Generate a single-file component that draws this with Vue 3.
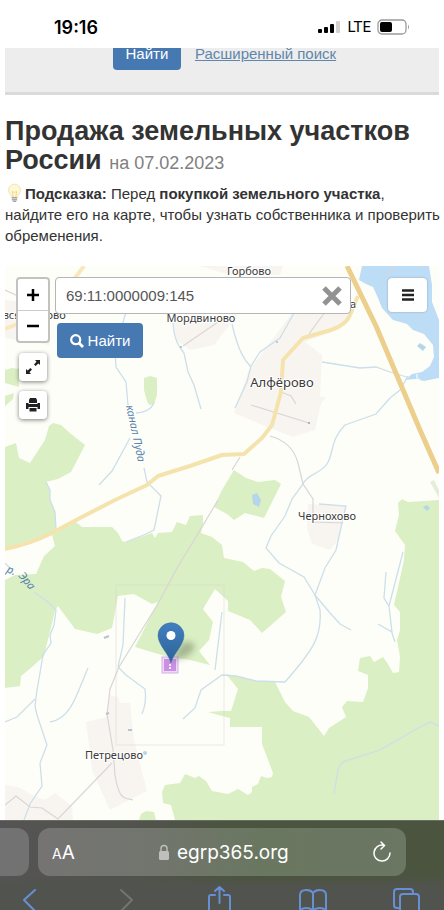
<script setup>
import { ref } from 'vue';

const numeroCatastral = ref('69:11:0000009:145');

const bosques = [
    'M5 447L16 443L19 458L30 463L45 440L49 426L53 423L61 425L71 434L85 445L71 472L58 479L46 482L50 490L50 500L55 512L56 531L5 549Z',
    'M52 535L76 522L82 527L112 527L118 533L122 541L126 542L152 533L155 538L158 533L172 532L177 522L186 525L190 516L203 515L203 524L201 533L212 537L222 545L224 558L243 562L254 571L262 568L270 569L285 581L281 597L286 612L262 633L250 620L228 611L228 601L215 589L203 609L213 622L209 640L199 651L210 665L190 660L165 656L135 647L158 602L152 604L134 594L118 596L112 628L97 634L75 629L58 606L55 611L44 656L32 667L21 676L20 686L5 688V580L15 575L36 574L44 556L55 546Z',
    'M222 490L234 470L246 478L258 482L275 480L281 484L264 518L245 513L234 520L227 514L214 507Z',
    'M439 500L408 502L402 499L398 503L399 515L395 531L405 545L404 560L394 605L400 612V630L397 640L400 657L399 672L393 673L388 664L383 657L374 662L370 656L360 658L358 671L368 675V688L363 702L347 701L342 707L346 717L329 728L324 736L309 717L293 711L285 702L275 682L256 681L226 674L238 689L231 711L222 711L208 712L222 716L230 718V727H262V744L273 773L272 777L267 778L261 776L258 784L252 787L252 792L248 795L238 789L228 794L212 791L206 781L199 776L195 778L185 774L180 783L165 785L162 792L163 803L171 805L175 820H439Z',
    'M139 820L141 814L146 811L154 812L156 820Z',
    'M144 378L150 376L157 378V395L154 404L149 405L147 401L144 390Z',
    'M5 370L12 368L19 369V387L5 383Z',
    'M5 396L14 393L13 399L5 406Z'
];

const poblados = [
    'M234 413L248 372L292 313L340 308L350 318L331 332L305 342L322 355L320 397L326 397L321 404L315 430L293 437L272 429Z',
    'M174 322L238 314L214 345L190 350L176 340Z',
    'M5 300L50 304V345L5 338Z',
    'M308 504L346 506L343 520L338 540L330 550L312 544L307 528Z',
    'M86 722L106 717L110 695L118 697L120 703L130 703L134 740L147 791L110 810L92 770Z',
    'M5 785L18 787L32 795L45 800L55 793L72 806L73 820H5Z',
    'M200 266H283L280 275H230Z'
];

const arroyos = [
    'M173 322C174 340 179 347 184 353L188 372L194 385L201 409',
    'M126 312L115 350L116 367L126 382L128 405M154 402Q151 412 136 413',
    'M130 438L112 471L99 485M144 468L147 482L161 496L154 530L146 534L126 542',
    'M46 482L50 490L50 500L55 512L56 529',
    'M294 313L280 338L260 352L251 366L247 382L235 408M232 324C238 350 244 360 251 367',
    'M322 362L360 368L376 367L390 372L410 378M408 376L400 390L390 398L376 414L345 425C330 440 334 453 327 464C320 474 307 474 303 484L292 499L285 516L271 536L266 548L279 563L304 577L315 595L320 610C322 635 315 648 285 682',
    'M319 504L346 506L342 523L336 550L325 568L315 595L330 613L340 624L351 630',
    'M386 572L384 598L389 606L403 552M389 606L392 632L378 624M391 630L395 642',
    'M334 794L338 770Q340 762 348 760L380 750L420 727L430 722L439 726',
    'M5 563L12 570M34 592L48 602L56 610L54 625L50 635L51 643L43 655L40 673L37 690L35 706L37 715L47 745L40 763L42 786L30 804L24 820M35 699L17 717L5 722',
    'M88 668C78 690 72 719 50 722M125 598L123 645L118 667L126 675L145 689Q147 702 142 714',
    'M183 719L195 708L201 690L222 675L236 676L256 681L285 682M222 612L215 670'
];

const caminos = [
    'M270 436C285 440 294 448 298 463L303 484L313 499L313 522L343 523',
    'M240 457L232 470M218 500L196 537L177 568L159 602L119 667L110 689L107 714L113 750L115 775C119 800 124 798 133 800',
    'M251 405L309 423M281 392L291 396L296 404M325 312L309 334M218 322L183 346',
    'M5 805L16 796L30 807L42 808L58 819L112 763',
    'M5 290L20 297L50 298M392 266L386 276'
];

const villas = [
    { nombre: 'Горбово', x: 249, y: 275, tam: 11 },
    { nombre: 'Мордвиново', x: 201, y: 322, tam: 11 },
    { nombre: 'Овсянниково', x: 30, y: 319, tam: 11 },
    { nombre: 'а', x: 353, y: 308, tam: 11 },
    { nombre: 'Алфёрово', x: 282, y: 387, tam: 13 },
    { nombre: 'Чернохово', x: 327, y: 520, tam: 11 },
    { nombre: 'Петрецово', x: 114, y: 759, tam: 11 }
];
</script>

<template>
    <div class="pantalla">
        <header class="barra-estado">
            <time>19:16</time>
            <div class="estado">
                <svg width="24" height="14" viewBox="0 0 24 14">
                    <rect x="1" y="9" width="4" height="4" rx="1" />
                    <rect x="7" y="7" width="4" height="6" rx="1" />
                    <rect x="13" y="4" width="4" height="9" rx="1" />
                    <rect x="19" y="1" width="4" height="12" rx="1" fill="#d2d2d2" />
                </svg>
                <span>LTE</span>
                <svg width="33" height="16" viewBox="0 0 33 16">
                    <rect x="1" y="1" width="28" height="14" rx="4" fill="none" stroke="#9b9b9b" stroke-width="1.3" />
                    <rect x="3" y="3" width="12" height="10" rx="2" />
                    <path d="M31 5.5Q33 8 31 10.5Z" fill="#9b9b9b" />
                </svg>
            </div>
        </header>

        <main>
            <section class="franja">
                <div class="franja-acciones">
                    <button class="btn-azul btn-superior">Найти</button>
                    <a href="#">Расширенный поиск</a>
                </div>
            </section>

            <h1>Продажа земельных участков России <small>на 07.02.2023</small></h1>

            <p class="pista">
                <svg class="bombilla" width="20" height="20" viewBox="0 0 20 20">
                    <path d="M3.5 7.2A6 6 0 0 1 15.5 7.2C15.5 10.5 12.7 11.5 12.3 14.5H6.7C6.3 11.5 3.5 10.5 3.5 7.2Z" fill="#fff9d2" stroke="#ece5bc" />
                    <path d="M8.2 14L7.3 8.3L9.5 9.5L11.7 8.3L10.8 14" fill="none" stroke="#f0d797" />
                    <path d="M6.8 14H12.2V17L10.8 19H8.2L6.8 17Z" fill="#a4a4aa" />
                    <path d="M6.8 15.5H12.2M7 17.3H12" stroke="#dcdce2" stroke-width=".7" />
                </svg>
                <b>Подсказка:</b> Перед <b>покупкой земельного участка</b>, найдите его на карте, чтобы узнать
                собственника и проверить обременения.
            </p>

            <section class="mapa">
                <svg class="lienzo" viewBox="5 266 434 554">
                    <rect x="5" y="266" width="434" height="554" fill="#fefef8" />
                    <path v-for="d in poblados" :key="d" :d="d" fill="#f8f5f0" />
                    <path v-for="d in bosques" :key="d" :d="d" fill="#daefc3" />
                    <path d="M430 482L434 480L439 490V498Z" fill="#e5eddb" />
                    <path
                        d="M362 266L359 280L366 284L373 287L378 298L382 308L393 320L407 324L413 330L424 334L433 345L434 357L430 366L422 372L412 374L405 380L415 379L424 381L439 378V320L432 302L432 285L429 266Z"
                        fill="#bddcf5"
                    />
                    <path d="M417 346L420 343L426 347L423 351ZM252 495L257 493L261 500L259 507L253 504ZM423 507L427 505L430 508L427 511Z" fill="#b5d6ea" />
                    <path d="M417 374V388M413 381L420 379" stroke="#fff" stroke-width="1" />
                    <g class="arroyos">
                        <path v-for="d in arroyos" :key="d" :d="d" />
                    </g>
                    <g class="caminos">
                        <path v-for="d in caminos" :key="d" :d="d" />
                    </g>
                    <g fill="none" stroke-linejoin="round">
                        <path
                            d="M5 549Q30 544 52 533L80 518L115 500L147 485L158 476L190 466L222 455L244 454L262 438L272 425L281 392L283 360L303 338L331 330Q346 325 350 315L358 296"
                            stroke="#f5e3ae"
                            stroke-width="4"
                        />
                        <path d="M84 266L75 278M5 329L20 323" stroke="#f7e9bd" stroke-width="4" />
                        <path d="M347 266L376 326L420 430L439 473" stroke="#eccf8c" stroke-width="5" />
                    </g>
                    <rect x="116" y="585" width="108" height="160" fill="none" stroke="#ddd5d0" stroke-opacity=".5" />
                    <path d="M104 638L109 636M106 714L109 713M128 730L132 730" stroke="#b7c2d4" stroke-width="2" />
                    <circle cx="145" cy="753" r="2" fill="#b7d1ee" />
                    <circle cx="277" cy="342" r="1" fill="#a9bdd5" />
                    <circle cx="181" cy="347" r="1" fill="#9cb4d2" />
                    <circle cx="309" cy="423" r="1" fill="#9a9faf" />

                    <g class="villas">
                        <text v-for="v in villas" :key="v.nombre" :x="v.x" :y="v.y" :font-size="v.tam">{{ v.nombre }}</text>
                    </g>
                    <g class="rios">
                        <text transform="translate(126 406) rotate(78)">канал Пуда</text>
                        <text transform="translate(6 572) rotate(22)">р.</text>
                        <text transform="translate(18 576) rotate(50)">Эра</text>
                    </g>

                    <!-- parcela y marcador -->
                    <rect x="162" y="657" width="16" height="16" fill="#efd9f7" stroke="#d3b0e4" />
                    <rect x="164" y="659" width="12" height="12" fill="#c990e6" />
                    <path d="M170 664V670" stroke="#f7ebfb" stroke-width="2" stroke-dasharray="2 1" />
                    <defs>
                        <linearGradient id="azul" x2="0" y2="1">
                            <stop offset="0" stop-color="#407fbf" />
                            <stop offset="1" stop-color="#2e6397" />
                        </linearGradient>
                        <filter id="difuso" x="-50%" y="-50%" width="200%" height="200%">
                            <feGaussianBlur stdDeviation="3" />
                        </filter>
                    </defs>
                    <path d="M171 662L179 646Q187 638 194 644Q196 652 185 657Z" fill="#56614a" opacity=".4" filter="url(#difuso)" />
                    <path
                        d="M171 663C169 654 158 645 158 635.5A13 12.8 0 0 1 184 635.5C184 645 173 654 171 663Z"
                        fill="url(#azul)"
                        stroke="#356ea5"
                        stroke-width=".5"
                    />
                    <circle cx="171" cy="635.5" r="4.5" fill="#fff" />
                </svg>

                <div class="controles">
                    <div class="columna">
                        <div class="zoom">
                            <button aria-label="Приблизить">
                                <svg width="14" height="14" viewBox="0 0 14 14"><path d="M7 1V13M1 7H13" stroke="#000" stroke-width="2.5" /></svg>
                            </button>
                            <button aria-label="Отдалить">
                                <svg width="14" height="14" viewBox="0 0 14 14"><path d="M1 7H13" stroke="#000" stroke-width="2.5" /></svg>
                            </button>
                        </div>
                        <button class="btn-icono" aria-label="Во весь экран">
                            <svg width="16" height="16" viewBox="0 0 16 16">
                                <path d="M10 1H15V6L13.3 4.5L10.6 7L9 5.4L11.5 2.7ZM6 15H1V10L2.7 11.5L5.4 9L7 10.6L4.5 13.3Z" fill="#222" />
                            </svg>
                        </button>
                        <button class="btn-icono" aria-label="Печать">
                            <svg width="16" height="16" viewBox="0 0 16 16">
                                <path d="M5 1H11L12 3V6H4V3ZM1 6H3.5V7H12.5V6H15V12H12.5V10H3.5V12H1ZM4.5 11H11.5V14.5H4.5Z" fill="#222" />
                            </svg>
                        </button>
                    </div>

                    <form class="buscador" @submit.prevent>
                        <div class="caja">
                            <input v-model="numeroCatastral" type="text" aria-label="Кадастровый номер" />
                            <button type="button" aria-label="Очистить" @click="numeroCatastral = ''">
                                <svg width="20" height="20" viewBox="0 0 20 20"><path d="M2 2L18 18M18 2L2 18" stroke="#929292" stroke-width="5" /></svg>
                            </button>
                        </div>
                        <button class="btn-azul btn-buscar">
                            <svg width="14" height="14" viewBox="0 0 14 14">
                                <circle cx="5.7" cy="5.7" r="4.5" fill="none" stroke="#fff" stroke-width="2.2" />
                                <path d="M9 9L13 13" stroke="#fff" stroke-width="2.8" />
                            </svg>
                            Найти
                        </button>
                    </form>

                    <button class="btn-menu" aria-label="Меню">
                        <svg width="14" height="14" viewBox="0 0 14 14"><path d="M1 2.5H13M1 7H13M1 11.5H13" stroke="#222" stroke-width="2.4" /></svg>
                    </button>
                </div>
            </section>
        </main>

        <footer class="navegador">
            <div class="fila-direccion">
                <div class="pestana"></div>
                <div class="direccion">
                    <button class="btn-texto" aria-label="Размер текста"><small>A</small>A</button>
                    <div class="dominio">
                        <svg width="12" height="16" viewBox="0 0 12 16">
                            <rect x="1" y="7" width="10" height="9" rx="1.5" fill="#bfc0be" />
                            <path d="M3 8V4.5A3 3 0 0 1 9 4.5V8" fill="none" stroke="#bfc0be" stroke-width="1.4" />
                        </svg>
                        egrp365.org
                    </div>
                    <button aria-label="Обновить">
                        <svg width="20" height="22" viewBox="0 0 20 22" fill="none" stroke="#fff" stroke-width="1.5" stroke-linecap="round">
                            <path d="M11.5 4.2A8 8 0 1 0 18 12M9 1L12.5 4.5L9 8" />
                        </svg>
                    </button>
                </div>
            </div>
            <nav>
                <button aria-label="Назад">
                    <svg width="30" height="30" viewBox="0 0 30 30"><path d="M20 5L9 15L20 26" /></svg>
                </button>
                <button aria-label="Вперёд" disabled>
                    <svg width="30" height="30" viewBox="0 0 30 30"><path d="M12 5L23 15L12 26" /></svg>
                </button>
                <button aria-label="Поделиться">
                    <svg width="30" height="30" viewBox="0 0 30 30"><path d="M11 10H7Q5 10 5 12V26Q5 28 7 28H24Q26 28 26 26V12Q26 10 24 10H20M15.5 18V2M11 6L15.5 2L20 6" /></svg>
                </button>
                <button aria-label="Закладки">
                    <svg width="30" height="30" viewBox="0 0 30 30"><path d="M15 8Q13 5 8.5 5Q2 5 2 10V25Q8 21 15 25Q22 21 28 25V10Q28 5 21.5 5Q17 5 15 8V25" /></svg>
                </button>
                <button aria-label="Вкладки">
                    <svg width="30" height="30" viewBox="0 0 30 30"><path d="M8 23H5Q2 23 2 20V7Q2 4 5 4H18Q21 4 21 7V9M11 9H24Q27 9 27 12V25Q27 28 24 28H11Q8 28 8 25V12Q8 9 11 9Z" /></svg>
                </button>
            </nav>
        </footer>
    </div>
</template>

<style>
body {
    background-color: white;
}
</style>

<style scoped>
.pantalla {
    display: flex;
    flex-direction: column;
    height: 100dvh;
    overflow: hidden;
    font-family: "Liberation Sans", Arial, sans-serif;
    color: #333;
}

button {
    display: flex;
    justify-content: center;
    align-items: center;
    padding: 0;
    border: none;
    background: none;
    font-family: inherit;
    cursor: pointer;
}

svg {
    display: block;
    flex: none;
}

.barra-estado {
    display: flex;
    justify-content: space-between;
    align-items: center;
    flex: none;
    box-sizing: border-box;
    height: 48px;
    padding: 6px 34px 0 54px;
    color: black;
    font-family: Inter, sans-serif;
}

.barra-estado time {
    font-size: 18px;
    font-weight: 600;
}

.estado {
    display: flex;
    align-items: center;
    gap: 6px;
    font-family: Roboto, sans-serif;
    font-size: 15px;
}

main {
    flex: 1;
    min-height: 0;
    overflow: hidden;
    padding: 0 5px;
}

.franja {
    display: flex;
    justify-content: center;
    align-items: flex-end;
    box-sizing: border-box;
    height: 47px;
    padding: 0 0 22px 5px;
    border-bottom: 3px solid #dadada;
    background-color: #ededed;
    overflow: hidden;
}

.franja-acciones {
    display: flex;
    align-items: center;
    gap: 14px;
}

.franja-acciones a {
    color: #5f86ab;
    font-size: 15px;
}

.btn-azul {
    border-radius: 4px;
    background-color: #4678b2;
    color: white;
    font-size: 15px;
}

.btn-superior {
    width: 68px;
    height: 34px;
}

h1 {
    margin: 22px 0 5px;
    font-size: 27px;
    line-height: 29px;
}

h1 small {
    color: #808080;
    font-size: 18px;
    font-weight: normal;
}

.pista {
    margin: 0 -5px 20px 0;
    font-size: 15px;
    line-height: 21px;
}

.bombilla {
    display: inline-block;
    vertical-align: top;
}

.mapa {
    position: relative;
}

.lienzo {
    width: 100%;
    height: auto;
}

.arroyos path {
    fill: none;
    stroke: #ccdfea;
    stroke-width: 1.3px;
}

.caminos path {
    fill: none;
    stroke: #d9d5d8;
    stroke-width: 1.2px;
}

.villas text {
    fill: #3b3b3b;
    stroke: white;
    stroke-width: 2px;
    paint-order: stroke;
    text-anchor: middle;
    font-family: "Noto Sans", sans-serif;
}

.rios text {
    fill: #5682ae;
    font-family: "Noto Sans", sans-serif;
    font-size: 11px;
    font-style: italic;
}

.controles {
    position: absolute;
    top: 11px;
    left: 11px;
    right: 12px;
    display: flex;
    align-items: flex-start;
    gap: 5px;
}

.columna {
    display: flex;
    flex-direction: column;
    align-items: center;
    gap: 10px;
}

.zoom {
    border: 2px solid #c4c2be;
    border-radius: 4px;
    background-color: white;
}

.zoom button {
    width: 30px;
    height: 31px;
}

.zoom button + button {
    border-top: 1px solid #ccc;
}

.btn-icono {
    width: 28px;
    height: 28px;
    border-radius: 4px;
    background-color: white;
    box-shadow: 0 1px 4px rgba(0, 0, 0, 0.5);
}

.buscador {
    flex: 1;
    min-width: 0;
}

.caja {
    display: flex;
    align-items: center;
    box-sizing: border-box;
    height: 37px;
    padding: 0 8px 0 10px;
    border: 1px solid #b5b5b5;
    border-radius: 4px;
    background-color: white;
}

.caja input {
    flex: 1;
    min-width: 0;
    padding: 0;
    border: none;
    outline: none;
    background: none;
    color: #555;
    font-family: inherit;
    font-size: 15px;
}

.btn-buscar {
    gap: 4px;
    width: 86px;
    height: 35px;
    margin: 9px 0 0 2px;
}

.btn-menu {
    width: 39px;
    height: 34px;
    margin: 1px 0 0 32px;
    border-radius: 4px;
    background-color: white;
    box-shadow: 0 0 2px rgba(0, 0, 0, 0.3);
}

.navegador {
    flex: none;
    height: 90px;
    overflow: hidden;
    border-top: 1px solid #6b6b66;
    box-sizing: border-box;
    background: linear-gradient(to bottom, rgba(81, 83, 78, 0) 60%, #51534e 75%), linear-gradient(to right, #555454 0%, #51534c 30%, #4a543e 55%, #4b543f 100%);
}

.fila-direccion {
    display: flex;
    gap: 9px;
    padding: 7px 38px 0 0;
}

.pestana {
    width: 29px;
    border-radius: 0 12px 12px 0;
    background-color: #737272;
}

.direccion {
    display: flex;
    justify-content: space-between;
    align-items: center;
    flex: 1;
    height: 48px;
    padding: 0 14px;
    border-radius: 12px;
    background: linear-gradient(to right, #757473 0%, #72756e 30%, #6a7760 60%, #6b7663 100%);
    color: white;
    font-family: Inter, sans-serif;
}

.btn-texto {
    align-items: baseline;
    color: white;
    font-size: 19px;
}

.btn-texto small {
    font-size: 14px;
}

.dominio {
    display: flex;
    align-items: center;
    gap: 7px;
    font-size: 19px;
}

nav {
    display: flex;
    justify-content: space-between;
    padding: 9px 22px 0 15px;
}

nav path {
    fill: none;
    stroke: #6790d4;
    stroke-width: 2px;
    stroke-linecap: round;
    stroke-linejoin: round;
}

nav button:disabled path {
    stroke: #73756f;
}
</style>
